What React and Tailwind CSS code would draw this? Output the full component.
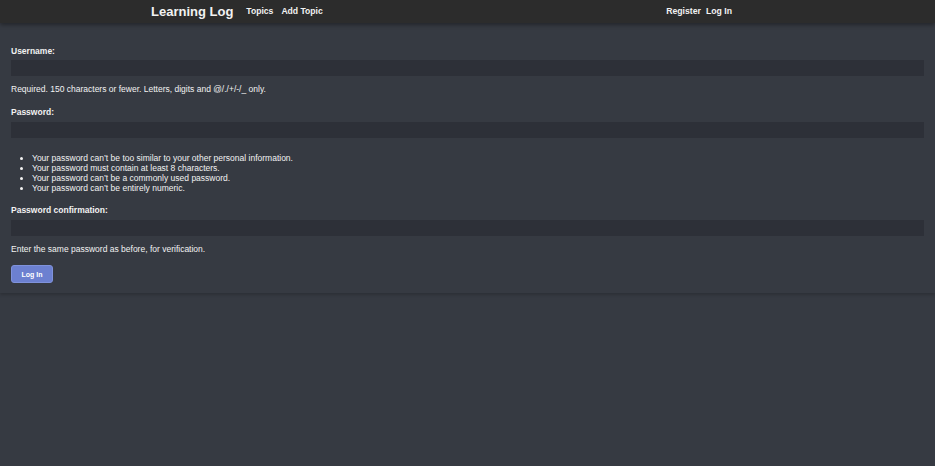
export default function App() {
  const rules = [
    "Your password can’t be too similar to your other personal information.",
    "Your password must contain at least 8 characters.",
    "Your password can’t be a commonly used password.",
    "Your password can’t be entirely numeric.",
  ];

  return (
    <div
      className="min-h-[466px] bg-[#363a42] text-[#f2f2f2]"
      style={{ fontFamily: '"Liberation Sans", Arial, sans-serif' }}
    >
      <nav className="relative z-10 flex h-[23px] items-center justify-between bg-[#2c2c2c] pl-[151px] pr-[203px] shadow-[0_2px_4px_rgba(0,0,0,0.35)]">
        <div className="flex items-center">
          <a className="text-[13px] font-bold leading-none">Learning Log</a>
          <a className="ml-[13px] text-[8.6px] font-bold leading-none">Topics</a>
          <a className="ml-[8px] text-[8.6px] font-bold leading-none">Add Topic</a>
        </div>
        <div className="flex items-center gap-[5px]">
          <a className="text-[8.7px] font-bold leading-none">Register</a>
          <a className="text-[8.7px] font-bold leading-none">Log In</a>
        </div>
      </nav>

      <form className="px-[11px] pb-[10px] pt-[23px] text-[8.5px] leading-[10px] shadow-[0_2px_3px_rgba(0,0,0,0.18)]">
        <label className="block font-bold">Username:</label>
        <input
          type="text"
          className="mt-[4px] block h-[16px] w-full bg-[#2d3038] outline-none"
        />
        <p className="mt-[8px]">
          Required. 150 characters or fewer. Letters, digits and @/./+/-/_ only.
        </p>

        <label className="mt-[13px] block font-bold">Password:</label>
        <input
          type="password"
          className="mt-[5px] block h-[16px] w-full bg-[#2d3038] outline-none"
        />
        <ul className="mt-[15px] list-disc pl-[21px]">
          {rules.map((r) => (
            <li key={r}>{r}</li>
          ))}
        </ul>

        <label className="mt-[12px] block font-bold">Password confirmation:</label>
        <input
          type="password"
          className="mt-[5px] block h-[16px] w-full bg-[#2d3038] outline-none"
        />
        <p className="mt-[8px]">Enter the same password as before, for verification.</p>

        <button
          type="submit"
          className="mt-[11px] h-[18px] w-[42px] rounded-[3px] border border-[#7f92db] bg-[#6c80d0] text-[7px] font-bold leading-none text-white"
        >
          Log In
        </button>
      </form>
    </div>
  );
}
